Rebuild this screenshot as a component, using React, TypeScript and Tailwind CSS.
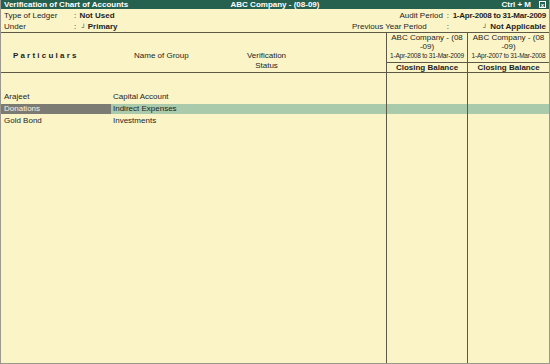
import React from "react"

const font = { fontFamily: '"Liberation Sans", Arial, sans-serif' }

const rows = [
	{ name: "Arajeet", group: "Capital Account" },
	{ name: "Donations", group: "Indirect Expenses", active: true },
	{ name: "Gold Bond", group: "Investments" },
]

const Cols = ({ className = "", children }: { className?: string; children?: React.ReactNode }) => (
	<div className={`flex ${className}`}>
		<div className="flex w-[385px]">{children}</div>
		<div className="w-[81px] border-l border-[#5e5848]" />
		<div className="w-[82px] border-l border-[#5e5848]" />
	</div>
)

const App = () => {
	return (
		<div
			className="flex h-[364px] w-[550px] flex-col border-x border-b border-[#9a978c] bg-[#faf4c7] text-[8px] leading-[10px] text-[#1e1e1e]"
			style={font}
		>
			{/* title bar */}
			<div className="flex h-[9px] items-center bg-[#26604f] px-[3px] font-bold leading-[9px] text-white">
				<span className="w-[200px]">Verification of Chart of Accounts</span>
				<span className="flex-1 text-center">ABC Company - (08-09)</span>
				<span className="flex w-[200px] items-center justify-end gap-[8px]">
					<span>Ctrl + M</span>
					<span className="flex h-[7px] w-[7px] items-center justify-center border border-white text-[6px] leading-none">
						x
					</span>
				</span>
			</div>

			{/* info */}
			<div className="flex h-[23px] justify-between whitespace-nowrap pt-[2px] pl-[3px] pr-[3px]">
				<div className="grid grid-cols-[70px_auto]">
					<span>Type of Ledger</span>
					<span>
						: <span className="ml-[1px] font-bold">Not Used</span>
					</span>
					<span>Under</span>
					<span>
						: <span className="ml-[3px] align-top text-[6px]">┘</span>
						<span className="ml-[2px] font-bold">Primary</span>
					</span>
				</div>
				<div className="grid w-[200px] grid-cols-[97px_6px_1fr]">
					<span className="text-right">Audit Period</span>
					<span className="text-right">:</span>
					<span className="text-right font-bold tracking-[-0.25px]">1-Apr-2008 to 31-Mar-2009</span>
					<span className="pl-[6px]">Previous Year Period</span>
					<span className="text-right">:</span>
					<span className="text-right font-bold">
						<span className="mr-[3px] align-top text-[6px] font-normal">┘</span>
						Not Applicable
					</span>
				</div>
			</div>

			{/* column header */}
			<div className="flex h-[41px] border-y border-[#5e5848]">
				<div className="flex w-[385px] items-end pb-[1px]">
					<span className="mb-[10px] ml-[12px] w-[121px] font-bold">P a r t i c u l a r s</span>
					<span className="mb-[10px] w-[95px]">Name of Group</span>
					<span className="w-[75px] text-center">
						Verification
						<br />
						Status
					</span>
				</div>
				<div className="flex w-[81px] flex-col border-l border-[#5e5848] text-center">
					<div className="flex flex-1 flex-col justify-end pb-[1px]">
						<span className="leading-[9px]">
							ABC Company - (08
							<br />
							-09)
						</span>
						<span className="whitespace-nowrap text-[6.5px] leading-[10px] tracking-[-0.2px]">
							1-Apr-2008 to 31-Mar-2009
						</span>
					</div>
					<div className="h-[11px] border-t border-[#5e5848] font-bold">Closing Balance</div>
				</div>
				<div className="flex w-[82px] flex-col border-l border-[#5e5848] text-center">
					<div className="flex flex-1 flex-col justify-end pb-[1px]">
						<span className="leading-[9px]">
							ABC Company - (08
							<br />
							-09)
						</span>
						<span className="whitespace-nowrap text-[6.5px] leading-[10px] tracking-[-0.2px]">
							1-Apr-2007 to 31-Mar-2008
						</span>
					</div>
					<div className="h-[11px] border-t border-[#5e5848] font-bold">Closing Balance</div>
				</div>
			</div>

			{/* body */}
			<Cols className="h-[18px]" />
			{rows.map((r) => (
				<div key={r.name} className="flex h-[12px] items-center">
					<div className={`flex h-[10px] flex-1 items-center ${r.active ? "bg-[#a9caab]" : ""}`}>
						<div className="flex h-full w-[385px] items-center">
							<span
								className={`h-full w-[110px] pl-[3px] ${r.active ? "bg-[#7c7b73] text-[#f4f2e6]" : ""}`}
							>
								{r.name}
							</span>
							<span className="pl-[2px]">{r.group}</span>
						</div>
						<div className="h-[12px] w-[81px] border-l border-[#5e5848]" />
						<div className="h-[12px] w-[82px] border-l border-[#5e5848]" />
					</div>
				</div>
			))}
			<Cols className="flex-1" />
		</div>
	)
}

export default App
